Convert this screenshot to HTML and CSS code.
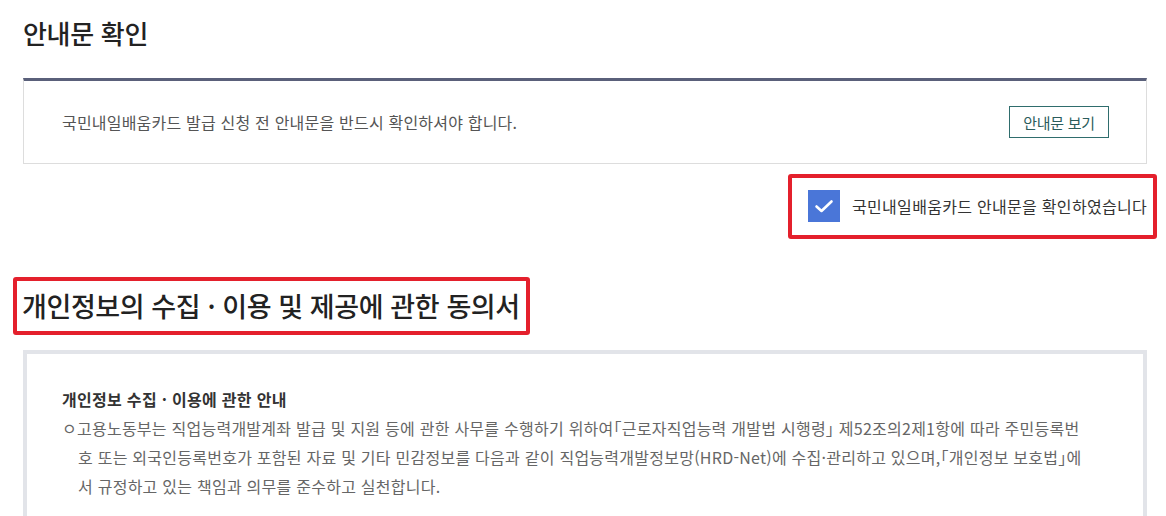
FILE: index.html
```html
<!DOCTYPE html>
<html lang="ko">
<head>
  <meta charset="UTF-8">
  <title>안내문 확인</title>
  <link rel="stylesheet" href="styles.css">
</head>
<body>
  <div class="container">
    <h1 class="page-title">안내문 확인</h1>

    <div class="notice-box">
      <p class="notice-text">국민내일배움카드 발급 신청 전 안내문을 반드시 확인하셔야 합니다.</p>
      <button class="view-btn">안내문 보기</button>
    </div>

    <div class="confirm-row">
      <label class="confirm-label mark">
        <span class="check-box">
          <svg width="32" height="32" viewBox="0 0 32 32">
            <path d="M8.5 16.5 L13.5 21 L23.5 11.5" fill="none" stroke="#fff" stroke-width="2.6" stroke-linecap="round" stroke-linejoin="round"/>
          </svg>
        </span>
        국민내일배움카드 안내문을 확인하였습니다
      </label>
    </div>

    <h2 class="section-title mark">개인정보의 수집 · 이용 및 제공에 관한 동의서</h2>

    <div class="agree-box">
      <h3 class="agree-head">개인정보 수집 · 이용에 관한 안내</h3>
      <p class="agree-text">ㅇ고용노동부는 직업능력개발계좌 발급 및 지원 등에 관한 사무를 수행하기 위하여「근로자직업능력 개발법 시행령」 제52조의2제1항에 따라 주민등록번호 또는 외국인등록번호가 포함된 자료 및 기타 민감정보를 다음과 같이 직업능력개발정보망(HRD-Net)에 수집·관리하고 있으며,「개인정보 보호법」에서 규정하고 있는 책임과 의무를 준수하고 실천합니다.</p>
    </div>
  </div>
</body>
</html>
```

FILE: styles.css
```css
* { box-sizing: border-box; }

body {
  margin: 0;
  font-family: "Noto Sans CJK KR", "Noto Sans", sans-serif;
  color: #333;
  background: #fff;
}

.container {
  width: 1147px;
  padding: 15px 0 0 23px;
}

.page-title {
  margin: 0;
  font-size: 26px;
  line-height: 36px;
  font-weight: 500;
  letter-spacing: -0.3px;
  color: #222;
}

.notice-box {
  margin-top: 27px;
  display: flex;
  justify-content: space-between;
  align-items: center;
  padding: 25px 37px 25px 38px;
  border: 1px solid #ddd;
  border-top: 3px solid #5a607a;
}

.notice-text {
  margin: 0;
  font-size: 16px;
  letter-spacing: 0.2px;
  color: #555;
}

.view-btn {
  width: 100px;
  height: 32px;
  padding: 0;
  background: #fff;
  border: 1px solid #2f6d6d;
  color: #2b5c5c;
  font-family: inherit;
  font-size: 15px;
  letter-spacing: -0.3px;
  cursor: pointer;
}

.mark {
  border: 4px solid #e4202c;
  border-radius: 3px;
}

.confirm-row {
  display: flex;
  justify-content: flex-end;
  margin-top: 10px;
  margin-right: -10px;
}

.confirm-label {
  display: flex;
  align-items: center;
  gap: 12px;
  padding: 12px 6px 13px 16px;
  font-size: 16px;
  letter-spacing: 0.3px;
  color: #333;
}

.check-box {
  width: 32px;
  height: 32px;
  background: #4a76d8;
  display: block;
}

.check-box svg { display: block; }

.section-title {
  display: inline-block;
  margin: 38px 0 0 -10px;
  padding: 0 6px 0 5px;
  font-size: 27px;
  line-height: 50px;
  font-weight: 500;
  letter-spacing: -0.4px;
  color: #222;
}

.agree-box {
  margin-top: 15px;
  border: 4px solid #e2e4e9;
  padding: 31px 58px 60px 35px;
}

.agree-head {
  margin: 0;
  font-size: 16px;
  line-height: 29px;
  font-weight: 600;
  letter-spacing: 0.3px;
  color: #333;
}

.agree-text {
  margin: 0;
  padding-left: 1em;
  text-indent: -1em;
  font-size: 16px;
  line-height: 29px;
  letter-spacing: 0.25px;
  font-feature-settings: "halt";
  color: #666;
}
```
